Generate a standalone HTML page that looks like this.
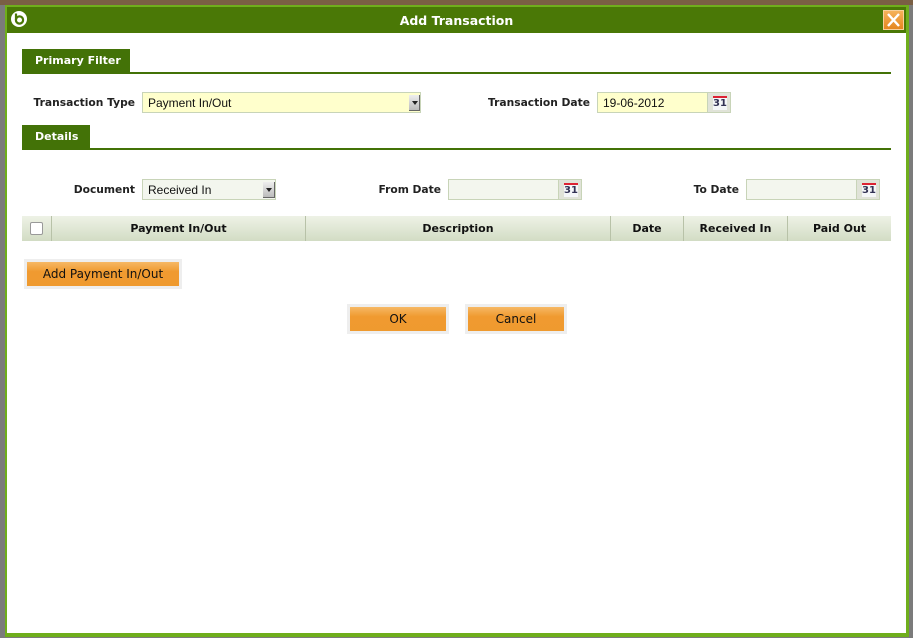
<!DOCTYPE html>
<html><head><meta charset="utf-8"><style>
*{margin:0;padding:0;box-sizing:border-box}
body{width:913px;height:638px;overflow:hidden;background:#7b7b7b;position:relative;font-family:"DejaVu Sans","Liberation Sans",sans-serif}
.a{position:absolute}
.lbl{position:absolute;font-weight:bold;font-size:10.7px;color:#222;text-align:right;white-space:nowrap}
.inp{position:absolute;border:1px solid #c8d4b8;font-family:"Liberation Sans",sans-serif;font-size:12px;color:#111;padding:3px 0 0 5px}
.cal{position:absolute;background:#e0e3d8;border:1px solid #c8d4b8;width:24px;height:20px}
.cal span{position:absolute;left:5px;top:3px;width:14px;height:14px;border-top:2px solid #d23;font:bold 10px "DejaVu Sans",sans-serif;color:#335;text-align:center;line-height:12px;background:#f4f6f8}
.tab{position:absolute;background:#437207;color:#fff;font-weight:bold;font-size:11px;padding-left:13px;line-height:24px}
.line{position:absolute;left:22px;width:869px;height:2px;background:#437207}
.th{position:absolute;top:216px;height:25px;background:linear-gradient(#eef2e6,#d2dcc4);font-weight:bold;font-size:11px;color:#111;text-align:center;line-height:26px;border-right:1px solid #b8c2a8}
.btn{position:absolute;background:#eee;padding:3px}
.btn div{background:linear-gradient(#f6b865 0,#f09a30 40%,#ef9a2f 100%);height:100%;font-family:"DejaVu Sans",sans-serif;font-size:12px;color:#111;text-align:center;line-height:25px}
</style></head><body>
<div class="a" style="left:0;top:0;width:913px;height:5px;background:#7a5f44"></div>
<div class="a" style="left:5px;top:5px;width:904px;height:632px;background:#6fae1c"></div>
<div class="a" style="left:7px;top:7px;width:899px;height:626px;background:#fff"></div>
<div class="a" style="left:7px;top:7px;width:899px;height:26px;background:#4a7806"></div>
<svg class="a" style="left:10px;top:10px" width="18" height="18" viewBox="0 0 18 18"><circle cx="9" cy="9" r="8" fill="#fff"/><circle cx="9.5" cy="10" r="3.6" fill="none" stroke="#4a7806" stroke-width="2.2"/><path d="M6 3.5 L6 10" stroke="#4a7806" stroke-width="2.2"/></svg>
<div class="a" style="left:0;width:913px;top:13px;text-align:center;color:#fff;font-weight:bold;font-size:12.5px">Add Transaction</div>
<div class="a" style="left:883px;top:10px;width:21px;height:20px;background:linear-gradient(#f5b25a,#e5861e);border:1px solid #f7d09a"></div>
<svg class="a" style="left:883px;top:10px" width="21" height="20"><path d="M5 4 L16 16 M16 4 L5 16" stroke="#fff" stroke-width="2.4"/></svg>

<div class="tab" style="left:22px;top:49px;width:108px;height:23px">Primary Filter</div>
<div class="line" style="top:72px"></div>
<div class="lbl" style="right:778px;top:96px">Transaction Type</div>
<div class="inp" style="left:142px;top:92px;width:279px;height:21px;background:#ffffcc">Payment In/Out</div>
<div class="a" style="left:409px;top:95px;width:11px;height:16px;background:linear-gradient(#eee,#bbb);border-right:1px solid #666;border-bottom:1px solid #666"><div class="a" style="left:3px;top:6px;border:3px solid transparent;border-top:4px solid #222"></div></div>
<div class="lbl" style="right:323px;top:96px">Transaction Date</div>
<div class="inp" style="left:597px;top:92px;width:111px;height:21px;background:#ffffcc">19-06-2012</div>
<div class="cal" style="left:707px;top:92px;height:21px"><span>31</span></div>

<div class="tab" style="left:22px;top:125px;width:68px;height:23px">Details</div>
<div class="line" style="top:148px"></div>
<div class="lbl" style="right:778px;top:183px">Document</div>
<div class="inp" style="left:142px;top:179px;width:134px;height:21px;background:#f3f6ee">Received In</div>
<div class="a" style="left:263px;top:182px;width:12px;height:16px;background:linear-gradient(#eee,#bbb);border-right:1px solid #666;border-bottom:1px solid #666"><div class="a" style="left:3px;top:6px;border:3px solid transparent;border-top:4px solid #222"></div></div>
<div class="lbl" style="right:472px;top:183px">From Date</div>
<div class="inp" style="left:448px;top:179px;width:111px;height:21px;background:#f3f6ee"></div>
<div class="cal" style="left:558px;top:179px;height:21px"><span>31</span></div>
<div class="lbl" style="right:174px;top:183px">To Date</div>
<div class="inp" style="left:746px;top:179px;width:111px;height:21px;background:#f3f6ee"></div>
<div class="cal" style="left:856px;top:179px;height:21px"><span>31</span></div>

<div class="th" style="left:22px;width:30px"><div class="a" style="left:8px;top:6px;width:13px;height:13px;background:#fff;border:1px solid #999;border-radius:2px"></div></div>
<div class="th" style="left:52px;width:254px">Payment In/Out</div>
<div class="th" style="left:306px;width:305px">Description</div>
<div class="th" style="left:611px;width:73px">Date</div>
<div class="th" style="left:684px;width:104px">Received In</div>
<div class="th" style="left:788px;width:103px;border-right:none">Paid Out</div>

<div class="btn" style="left:24px;top:259px;width:158px;height:30px"><div>Add Payment In/Out</div></div>
<div class="btn" style="left:347px;top:304px;width:102px;height:30px"><div>OK</div></div>
<div class="btn" style="left:465px;top:304px;width:102px;height:30px"><div>Cancel</div></div>
</body></html>
